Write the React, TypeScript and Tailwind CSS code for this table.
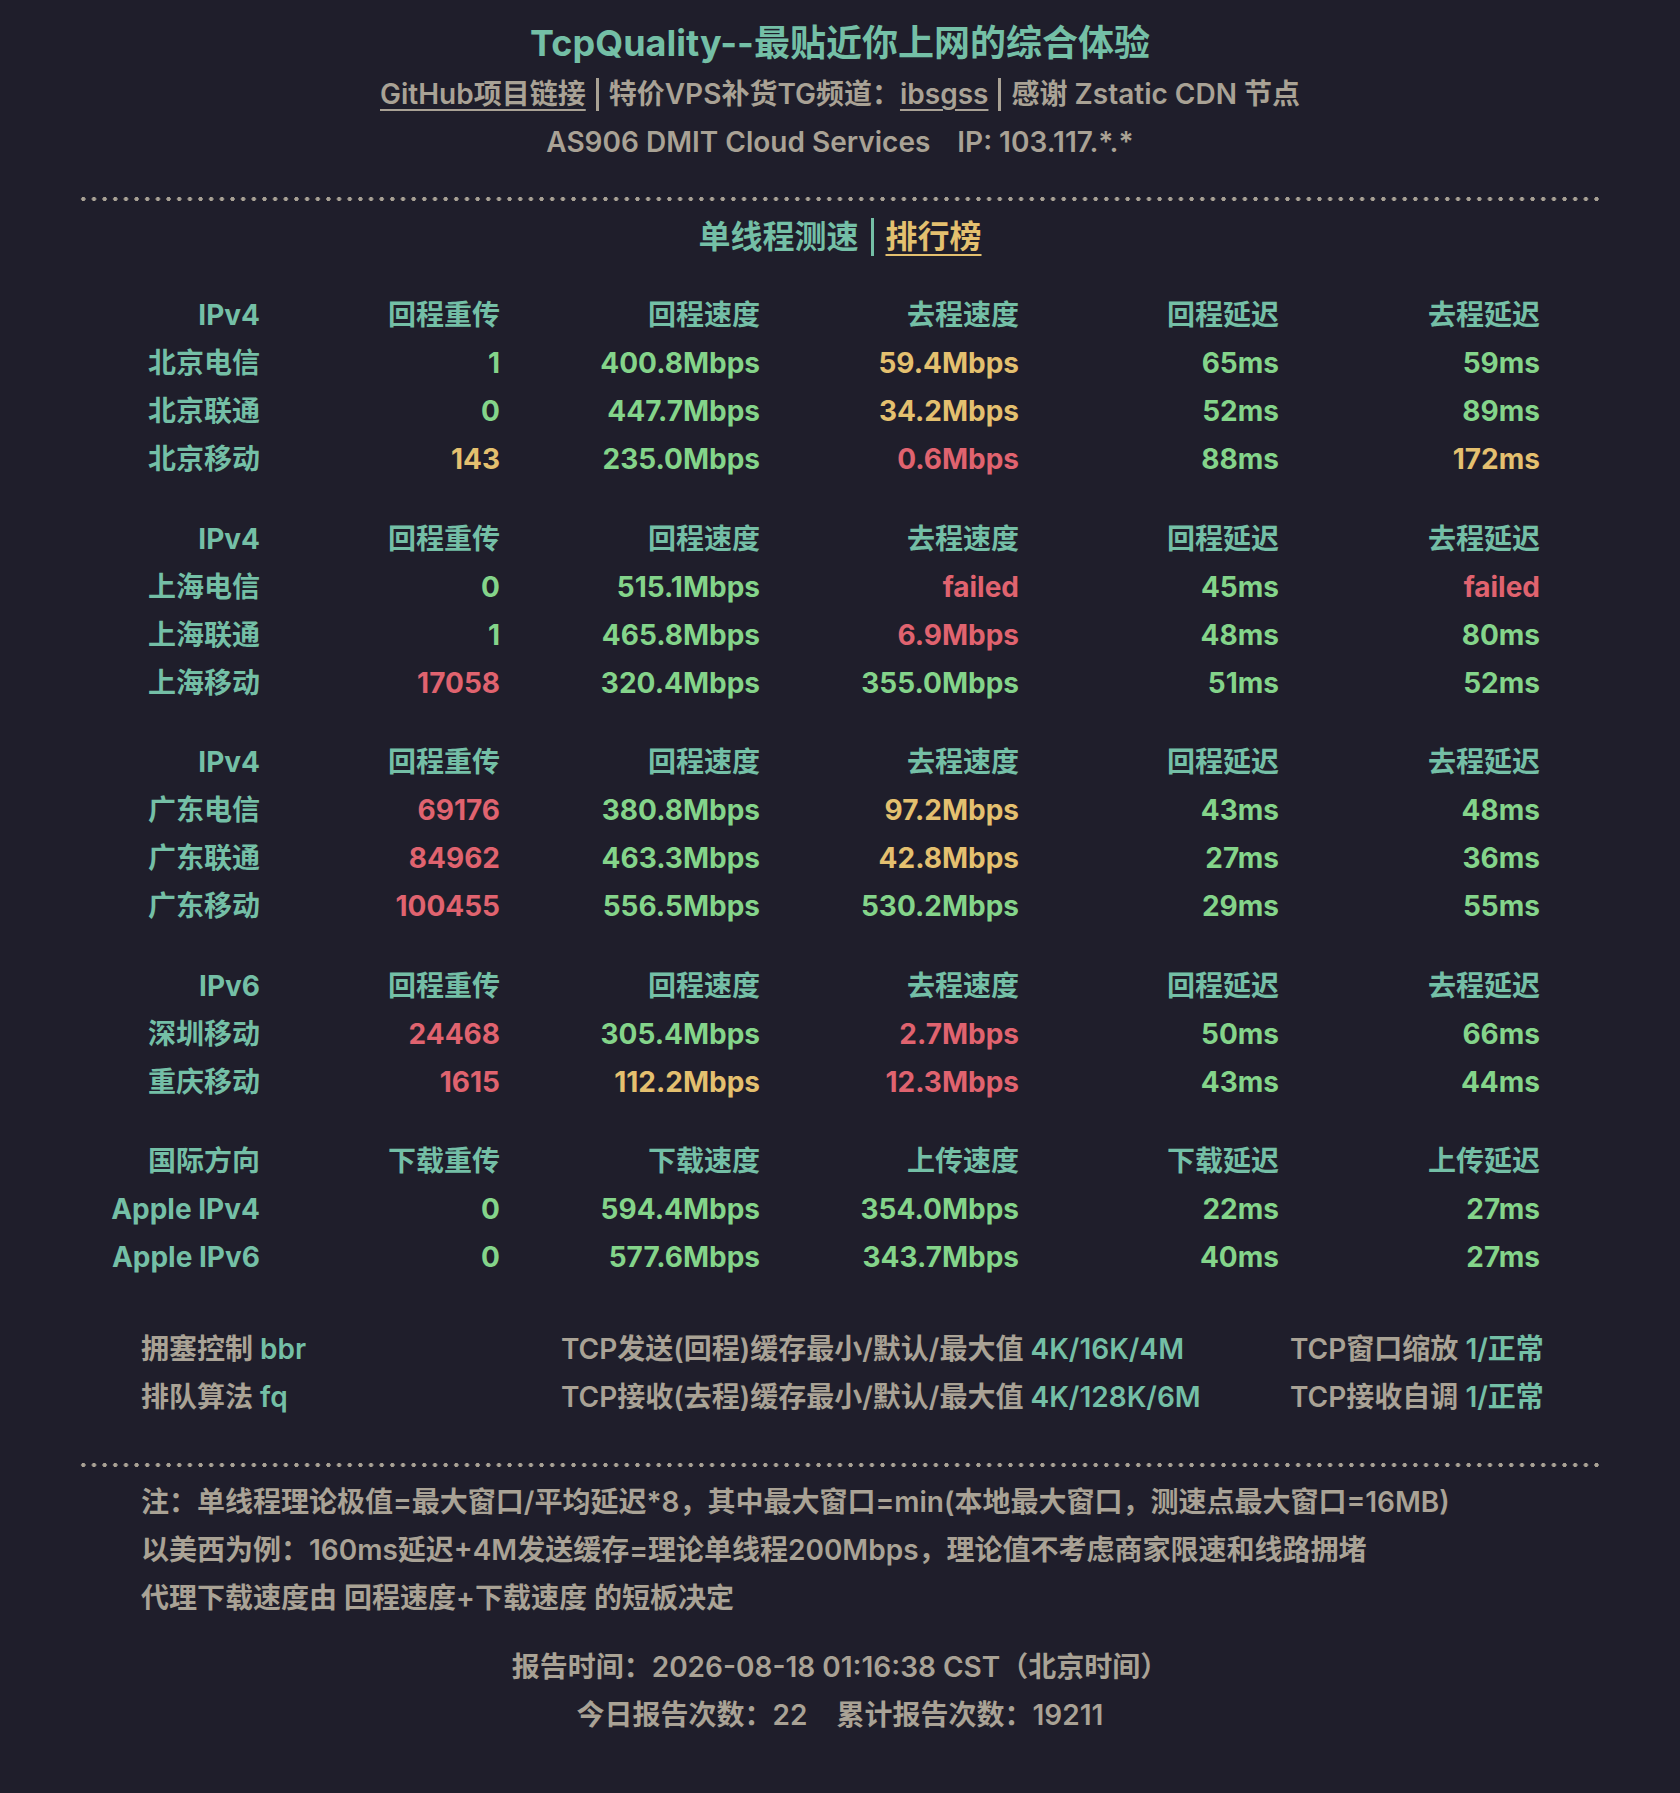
import React from "react";

type Tone = "g" | "y" | "r";

type Row = { name: string; vals: [string, Tone][] };

type Group = { head: string[]; rows: Row[] };

const TONE: Record<Tone, string> = {
  g: "text-[#84d48a]",
  y: "text-[#e4c06f]",
  r: "text-[#e0636f]",
};

const CN_HEAD = ["回程重传", "回程速度", "去程速度", "回程延迟", "去程延迟"];

const GROUPS: Group[] = [
  {
    head: ["IPv4", ...CN_HEAD],
    rows: [
      { name: "北京电信", vals: [["1", "g"], ["400.8Mbps", "g"], ["59.4Mbps", "y"], ["65ms", "g"], ["59ms", "g"]] },
      { name: "北京联通", vals: [["0", "g"], ["447.7Mbps", "g"], ["34.2Mbps", "y"], ["52ms", "g"], ["89ms", "g"]] },
      { name: "北京移动", vals: [["143", "y"], ["235.0Mbps", "g"], ["0.6Mbps", "r"], ["88ms", "g"], ["172ms", "y"]] },
    ],
  },
  {
    head: ["IPv4", ...CN_HEAD],
    rows: [
      { name: "上海电信", vals: [["0", "g"], ["515.1Mbps", "g"], ["failed", "r"], ["45ms", "g"], ["failed", "r"]] },
      { name: "上海联通", vals: [["1", "g"], ["465.8Mbps", "g"], ["6.9Mbps", "r"], ["48ms", "g"], ["80ms", "g"]] },
      { name: "上海移动", vals: [["17058", "r"], ["320.4Mbps", "g"], ["355.0Mbps", "g"], ["51ms", "g"], ["52ms", "g"]] },
    ],
  },
  {
    head: ["IPv4", ...CN_HEAD],
    rows: [
      { name: "广东电信", vals: [["69176", "r"], ["380.8Mbps", "g"], ["97.2Mbps", "y"], ["43ms", "g"], ["48ms", "g"]] },
      { name: "广东联通", vals: [["84962", "r"], ["463.3Mbps", "g"], ["42.8Mbps", "y"], ["27ms", "g"], ["36ms", "g"]] },
      { name: "广东移动", vals: [["100455", "r"], ["556.5Mbps", "g"], ["530.2Mbps", "g"], ["29ms", "g"], ["55ms", "g"]] },
    ],
  },
  {
    head: ["IPv6", ...CN_HEAD],
    rows: [
      { name: "深圳移动", vals: [["24468", "r"], ["305.4Mbps", "g"], ["2.7Mbps", "r"], ["50ms", "g"], ["66ms", "g"]] },
      { name: "重庆移动", vals: [["1615", "r"], ["112.2Mbps", "y"], ["12.3Mbps", "r"], ["43ms", "g"], ["44ms", "g"]] },
    ],
  },
  {
    head: ["国际方向", "下载重传", "下载速度", "上传速度", "下载延迟", "上传延迟"],
    rows: [
      { name: "Apple IPv4", vals: [["0", "g"], ["594.4Mbps", "g"], ["354.0Mbps", "g"], ["22ms", "g"], ["27ms", "g"]] },
      { name: "Apple IPv6", vals: [["0", "g"], ["577.6Mbps", "g"], ["343.7Mbps", "g"], ["40ms", "g"], ["27ms", "g"]] },
    ],
  },
];

const SETTINGS: [string, string][][] = [
  [["拥塞控制", "bbr"], ["TCP发送(回程)缓存最小/默认/最大值", "4K/16K/4M"], ["TCP窗口缩放", "1/正常"]],
  [["排队算法", "fq"], ["TCP接收(去程)缓存最小/默认/最大值", "4K/128K/6M"], ["TCP接收自调", "1/正常"]],
];

const NOTES = [
  "注：单线程理论极值=最大窗口/平均延迟*8，其中最大窗口=min(本地最大窗口，测速点最大窗口=16MB)",
  "以美西为例：160ms延迟+4M发送缓存=理论单线程200Mbps，理论值不考虑商家限速和线路拥堵",
  "代理下载速度由 回程速度+下载速度 的短板决定",
];

const GRID = "grid grid-cols-[182px_240px_260px_259px_260px_261px] text-right";

function Dots() {
  return (
    <div className="mx-[78px] h-[6px] bg-[radial-gradient(circle,#a9a295_1.9px,transparent_2.3px)] bg-[length:10.67px_6px] bg-repeat-x" />
  );
}

function Bar({ big }: { big?: boolean }) {
  return big ? (
    <span className="inline-block w-[3px] h-[38px] align-middle mx-[12px] -mt-[5px] bg-[#74bfa6]" />
  ) : (
    <span className="inline-block w-[3px] h-[33px] align-middle mx-[10px] -mt-[4px] bg-[#a9a295]" />
  );
}

export default function App() {
  return (
    <div
      className="min-h-[1793px] w-full bg-[#1f1e2b] text-[28px] font-semibold text-[#a9a295] pt-[16px]"
      style={{ fontFamily: "Inter, 'Noto Sans CJK SC', sans-serif" }}
    >
      {/* header */}
      <h1 className="text-center text-[36px] leading-[54px] font-bold text-[#74bfa6]">
        TcpQuality--最贴近你上网的综合体验
      </h1>
      <div className="text-center leading-[48px]">
        <span className="underline decoration-2 underline-offset-[5px]">GitHub项目链接</span>
        <Bar />
        特价VPS补货TG频道：<span className="underline decoration-2 underline-offset-[5px]">ibsgss</span>
        <Bar />
        感谢 Zstatic CDN 节点
      </div>
      <div className="text-center leading-[48px]">
        AS906 DMIT Cloud Services<span className="ml-[27px]">IP: 103.117.*.*</span>
      </div>

      <div className="mt-[30px]">
        <Dots />
      </div>

      <div className="mt-[11px] text-center text-[32px] leading-[48px] font-bold text-[#74bfa6]">
        单线程测速
        <Bar big />
        <span className="text-[#e4c06f] underline decoration-2 underline-offset-[6px]">排行榜</span>
      </div>

      {/* result table */}
      <div className="mt-[30px] px-[78px] flex flex-col gap-[31.5px] font-bold">
        {GROUPS.map((g, gi) => (
          <div key={gi} className="flex flex-col">
            <div className={`${GRID} leading-[48px] text-[#74bfa6]`}>
              {g.head.map((h) => (
                <div key={h}>{h}</div>
              ))}
            </div>
            {g.rows.map((r) => (
              <div key={r.name} className={`${GRID} leading-[48px]`}>
                <div className="text-[#74bfa6] whitespace-nowrap">{r.name}</div>
                {r.vals.map(([v, t], i) => (
                  <div key={i} className={TONE[t]}>{v}</div>
                ))}
              </div>
            ))}
          </div>
        ))}
      </div>

      {/* tcp settings */}
      <div className="mt-[44px] pl-[141px] flex flex-col">
        {SETTINGS.map((row, ri) => (
          <div key={ri} className="grid grid-cols-[420px_729px_auto] leading-[48px]">
            {row.map(([k, v]) => (
              <div key={k} className="whitespace-nowrap">
                {k} <span className="text-[#74bfa6]">{v}</span>
              </div>
            ))}
          </div>
        ))}
      </div>

      <div className="mt-[40.5px]">
        <Dots />
      </div>

      <div className="mt-[10.5px] pl-[141px] flex flex-col">
        {NOTES.map((n) => (
          <div key={n} className="leading-[48px] whitespace-nowrap">{n}</div>
        ))}
      </div>

      <div className="mt-[21px] text-center">
        <div className="leading-[48px]">报告时间：2026-08-18 01:16:38 CST（北京时间）</div>
        <div className="leading-[48px]">
          今日报告次数：22<span className="ml-[29px]">累计报告次数：19211</span>
        </div>
      </div>
    </div>
  );
}
